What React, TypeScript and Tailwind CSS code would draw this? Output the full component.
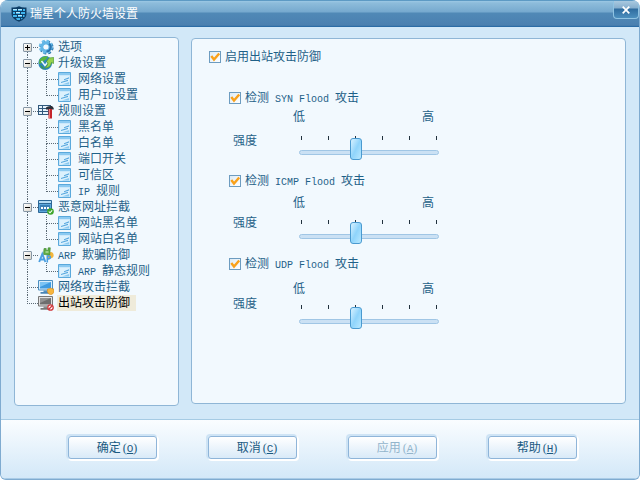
import React, { useState } from "react";

const fontStack = "font-['Liberation_Sans','Noto_Sans_CJK_SC',sans-serif]";

/* ---------- text ---------- */

/** Renders half-width runs in a monospaced face so they keep a half-em pitch. */
function Mixed({ text }: { text: string }) {
  const parts = text.match(/[\x20-\x7e]+|[^\x20-\x7e]+/g) ?? [];
  return (
    <>
      {parts.map((part, i) =>
        /^[\x20-\x7e]/.test(part) ? (
          <span key={i} className="whitespace-pre font-['Liberation_Mono',monospace] text-[10px] leading-none">
            {part}
          </span>
        ) : (
          <span key={i}>{part}</span>
        )
      )}
    </>
  );
}

/* ---------- icons ---------- */

function ShieldIcon() {
  return (
    <svg viewBox="0 0 16 16" className="size-4 shrink-0" aria-hidden="true">
      <path d="M.5 1.500 Q4.500 2 8 .3 Q11.500 2 15.500 1.500 V8 Q15.500 13 8 15.800 Q.5 13 .5 8 Z" fill="#0d3d66" />
      <path d="M2 3h4v2H2zM7 3h4v2H7zM12 3h2v2h-2zM2 6h2v2H2zM5 6h4v2H5zM10 6h4v2h-4zM2 9h4v2H2zM7 9h4v2H7zM12 9h1.500v2H12zM5 12h4v2H6zM10 12h2l-2 1.500z" fill="#3fb4ee" />
      <path d="M2 3h4v1H2zM7 3h4v1H7zM5 6h4v1H5zM7 9h4v1H7z" fill="#b4e8ff" />
    </svg>
  );
}

function GearIcon() {
  return (
    <svg viewBox="0 0 16 16" className="size-4 shrink-0" aria-hidden="true">
      <circle cx="8.500" cy="8.500" r="5.800" fill="none" stroke="#1f6ba6" strokeWidth="2.600" strokeDasharray="2.600 1.955" />
      <circle cx="7.800" cy="7.800" r="5.800" fill="none" stroke="#6fc0ec" strokeWidth="2.600" strokeDasharray="2.600 1.955" />
      <circle cx="8" cy="8" r="4.100" fill="none" stroke="#62b6e6" strokeWidth="3.200" />
      <path d="M11 4.800 A4.300 4.300 0 0 1 8.500 12.500" fill="none" stroke="#2a74ae" strokeWidth="2" />
      <circle cx="7.800" cy="8" r="2.300" fill="#f2f9fe" />
    </svg>
  );
}

function UpdateIcon() {
  return (
    <svg viewBox="0 0 16 16" className="size-4 shrink-0" aria-hidden="true">
      <circle cx="7.200" cy="8" r="6.900" fill="#2e86ba" />
      <path d="M1.500 4.500 Q5 .5 10 1.500 L8 4.500 Q5.500 5 5 7.500 L1 9 Z" fill="#58b53f" />
      <path d="M2 10 Q5 10.500 6 14.500 Q2.800 13.300 2 10Z" fill="#3c9a4b" />
      <path d="M3.500 6 L7 10.500 L13 3" fill="none" stroke="#eaf8ff" strokeWidth="1.500" />
      <path d="M8.500 6.500 L11 3 L15.700 2.500 L15.500 8.500 L13.500 7.500 Q12.500 13 6.500 13 Q10 10.500 10 8 Z" fill="#96d24e" stroke="#4d9a34" strokeWidth=".7" />
    </svg>
  );
}

function RulesIcon() {
  return (
    <svg viewBox="0 0 16 16" className="size-4 shrink-0" aria-hidden="true">
      <path d="M0 2h13v10H0z" fill="#31597c" />
      <path d="M1 3h3v2H1zM5 3h7v2H5zM1 6h3v2H1zM5 6h5v2H5zM1 9h3v2H1zM5 9h5v2H5z" fill="#e6f3fc" />
      <path d="M8 4.500 Q10 2.500 14 3 L15.700 5 V6.500 H8z" fill="#2b2f38" />
      <path d="M10.500 6h3.500v9.500h-3.500z" fill="#c5242b" />
      <path d="M11 6h1v9h-1z" fill="#f07a74" />
    </svg>
  );
}

function PageIcon() {
  return (
    <svg viewBox="0 0 16 16" className="size-4 shrink-0" aria-hidden="true">
      <path d="M.5 1.500h12v13H.5z" fill="#cbe8fb" stroke="#5aa9dc" />
      <path d="M1 2h11v2H1z" fill="#8ccaf1" />
      <path d="M2 5h9v8.500H2z" fill="#dcf1fd" />
      <path d="M6 8.300 L11 6.300 V7.600 L6 9.300zM3 11 L10 8.700 V10 L3 12z" fill="#56a7de" />
      <path d="M4 13.500 L11 11 V13.500z" fill="#8ccaf0" />
    </svg>
  );
}

function UrlIcon() {
  return (
    <svg viewBox="0 0 16 16" className="size-4 shrink-0" aria-hidden="true">
      <path d="M.5 1.500h13v12H.5z" fill="#5da7da" stroke="#2c6796" />
      <path d="M1 2h12v2H1z" fill="#b5dcf4" />
      <path d="M1 4h12v1H1z" fill="#2c6796" />
      <path d="M2 6h10v6H2z" fill="#3a7fb6" />
      <path d="M3 8h2v2H3zM6 8h2v2H6zM9 8h2v2H9z" fill="#fff" />
      <circle cx="12.500" cy="12.500" r="3.300" fill="#3da52a" />
      <path d="M10.800 12.500 L12 13.800 L14.200 11.300" fill="none" stroke="#fff" strokeWidth="1.100" />
    </svg>
  );
}

function ArpIcon() {
  return (
    <svg viewBox="0 0 16 16" className="size-4 shrink-0" aria-hidden="true">
      <path d="M9 8 Q12 3.500 15 6 Q17 10.500 12.500 11.500 L9 12z" fill="#f4b63c" />
      <path d="M5.500 7.500 L6 1.500 H8.200 V3.500 H9.800 L10.200 .8 H12.300 L11.700 8z" fill="#5fae45" stroke="#37852a" strokeWidth=".6" />
      <path d="M7.500 5 H10.500" stroke="#d6f0c8" strokeWidth="1" />
      <path d="M1.200 15 L4.300 7 L7.400 15 M2.500 12.500 H6.500" fill="none" stroke="#4b9fe0" strokeWidth="1.900" />
      <path d="M9.300 15.500 V9 Q12.800 8.500 12.300 10.500 Q12 12 9.300 12" fill="none" stroke="#4b9fe0" strokeWidth="1.600" />
    </svg>
  );
}

function MonitorIcon({ off = false }: { off?: boolean }) {
  return (
    <svg viewBox="0 0 16 16" className="size-4 shrink-0" aria-hidden="true">
      <path d="M.5 1.500h14v9.500H.5z" fill={off ? "#e2e2e2" : "#d9edfb"} stroke={off ? "#777" : "#4d8fc0"} />
      <path d="M2 3h11v6.500H2z" fill={off ? "#6e6e6e" : "#3f9be0"} />
      <path d="M2 3h11L2 8z" fill={off ? "#929292" : "#7cc4f4"} />
      <path d="M5.500 11.500h4V13h-4z" fill={off ? "#8a8a8a" : "#5490bd"} />
      <path d="M2.500 13h9.500v1.800H2.500z" fill={off ? "#777" : "#4a84b4"} />
      {off ? (
        <>
          <circle cx="12.500" cy="12.500" r="2.700" fill="#fff" stroke="#d0363a" strokeWidth="1.300" />
          <path d="M10.800 14.200 L14.200 10.800" stroke="#d0363a" strokeWidth="1.300" />
        </>
      ) : (
        <path d="M9.500 10 Q11.500 10 12.700 9 Q14 10 16 10 V13 Q15.500 15 12.700 15.800 Q10 15 9.500 13z" fill="#f6b53d" stroke="#d58a1c" strokeWidth=".6" />
      )}
    </svg>
  );
}

/* ---------- tree ---------- */

type Line = "first" | "tee" | "elbow" | "line";

function Branch({ line, className }: { line: Line; className: string }) {
  const edge = "border-dotted border-[#5d6b76]";
  return (
    <span className={`flex h-4 shrink-0 flex-col ${className}`} aria-hidden="true">
      <span
        className={`h-[9px] ${edge} ${line === "first" ? "border-b" : line === "line" ? "border-l" : "border-b border-l"}`}
      />
      <span className={`h-[7px] ${edge} ${line === "elbow" ? "" : "border-l"}`} />
    </span>
  );
}

function Toggle({ open, onClick, name }: { open: boolean; onClick: () => void; name: string }) {
  return (
    <button
      type="button"
      aria-label={name}
      aria-expanded={open}
      onClick={onClick}
      className="absolute top-1 -left-1 size-[9px] rounded-[1px] border border-[#8797a5] bg-linear-to-br from-white to-[#d8d5cb]"
    >
      <span className="absolute top-[3px] left-px h-px w-[5px] bg-black" />
      {!open && <span className="absolute top-px left-[3px] h-[5px] w-px bg-black" />}
    </button>
  );
}

type Node = { label: string; icon: React.ReactNode; children?: string[]; collapsed?: boolean };

const nodes: Node[] = [
  { label: "选项", icon: <GearIcon />, children: [], collapsed: true },
  { label: "升级设置", icon: <UpdateIcon />, children: ["网络设置", "用户ID设置"] },
  { label: "规则设置", icon: <RulesIcon />, children: ["黑名单", "白名单", "端口开关", "可信区", "IP 规则"] },
  { label: "恶意网址拦截", icon: <UrlIcon />, children: ["网站黑名单", "网站白名单"] },
  { label: "ARP 欺骗防御", icon: <ArpIcon />, children: ["ARP 静态规则"] },
  { label: "网络攻击拦截", icon: <MonitorIcon /> },
  { label: "出站攻击防御", icon: <MonitorIcon off /> },
];

function TreeNode({ node, line, selected }: { node: Node; line: Line; selected: boolean }) {
  const [open, setOpen] = useState(!node.collapsed);
  return (
    <li>
      <div className="relative flex h-4 items-center">
        <Branch line={line} className="w-[11px]" />
        {node.children && <Toggle open={open} onClick={() => setOpen(!open)} name={node.label} />}
        {node.icon}
        <span className={`ml-[3px] pr-[6px] pl-px whitespace-nowrap ${selected ? "bg-[#efebda] text-black" : ""}`}>
          <Mixed text={node.label} />
        </span>
      </div>
      {open && node.children && node.children.length > 0 && (
        <ul>
          {node.children.map((child, i) => (
            <li key={child} className="flex h-4 items-center">
              <Branch line="line" className="w-[19px]" />
              <Branch line={i === node.children!.length - 1 ? "elbow" : "tee"} className="w-3" />
              <PageIcon />
              <span className="ml-[3px] pl-px whitespace-nowrap">
                <Mixed text={child} />
              </span>
            </li>
          ))}
        </ul>
      )}
    </li>
  );
}

/* ---------- form ---------- */

function Check({ label }: { label: string }) {
  return (
    <label className="flex h-4 items-center gap-1">
      <span className="relative size-3 shrink-0">
        <input
          type="checkbox"
          defaultChecked
          className="peer block size-3 appearance-none border border-[#6d9cc0] bg-linear-to-br from-[#dcebf6] to-white"
        />
        <svg viewBox="0 0 12 12" className="pointer-events-none absolute inset-0 hidden size-3 peer-checked:block" aria-hidden="true">
          <path d="M2.300 5 L5 8.500 L10.200 2.500" fill="none" stroke="#f9a11b" strokeWidth="2.400" />
        </svg>
      </span>
      <span className="whitespace-nowrap">
        <Mixed text={label} />
      </span>
    </label>
  );
}

type Detection = { name: string; scale: string; caption: string; ticks: string };

const detections: Detection[] = [
  { name: "SYN", scale: "pt-[3px]", caption: "pt-[27px]", ticks: "mt-[11px]" },
  { name: "ICMP", scale: "pt-[6px]", caption: "pt-[26px]", ticks: "mt-[9px]" },
  { name: "UDP", scale: "pt-[9px]", caption: "pt-[24px]", ticks: "mt-[8px]" },
];

function DetectionGroup({ name, scale, caption, ticks }: Detection) {
  const id = `strength-${name}`;
  return (
    <section>
      <Check label={`检测 ${name} Flood 攻击`} />
      <div className="grid grid-cols-[60px_1fr] pl-1">
        <label htmlFor={id} className={caption}>
          强度
        </label>
        <div className={`w-[146px] ${scale}`}>
          <div className="flex justify-between pr-[5px]">
            <span>低</span>
            <span>高</span>
          </div>
          <div className={`flex justify-between pr-[2px] pl-2 ${ticks}`} aria-hidden="true">
            {[0, 1, 2, 3, 4, 5].map((t) => (
              <span key={t} className="h-1 w-px bg-[#22323e]" />
            ))}
          </div>
          <input
            id={id}
            type="range"
            min={0}
            max={5}
            defaultValue={2}
            className="-mt-[2px] ml-[6px] block h-[29px] w-[140px] appearance-none bg-transparent [&::-webkit-slider-runnable-track]:h-[5px] [&::-webkit-slider-runnable-track]:rounded-full [&::-webkit-slider-runnable-track]:border [&::-webkit-slider-runnable-track]:border-[#a0c6e5] [&::-webkit-slider-runnable-track]:bg-[#cbe1f4] [&::-webkit-slider-thumb]:-mt-[13px] [&::-webkit-slider-thumb]:h-[22px] [&::-webkit-slider-thumb]:w-3 [&::-webkit-slider-thumb]:appearance-none [&::-webkit-slider-thumb]:rounded-[3px] [&::-webkit-slider-thumb]:border [&::-webkit-slider-thumb]:border-[#4a9ad0] [&::-webkit-slider-thumb]:bg-linear-to-br [&::-webkit-slider-thumb]:from-[#d8f2ff] [&::-webkit-slider-thumb]:via-[#8fd4fb] [&::-webkit-slider-thumb]:to-[#b8e8ff]"
          />
        </div>
      </div>
    </section>
  );
}

function ActionButton({ text, mnemonic, disabled }: { text: string; mnemonic: string; disabled?: boolean }) {
  return (
    <button
      type="button"
      disabled={disabled}
      className="flex h-[23px] w-[89px] items-center justify-center gap-[2px] rounded-[3px] border border-[#8fb5d9] bg-linear-to-b from-white to-[#d9eaf8] pl-[9px] text-[#1a5a82] shadow-[-1px_-1px_0_1px_#cfe4f5,1px_1px_0_1px_#fff] disabled:text-[#93b5cc]"
    >
      <span>{text}</span>
      <span className="font-['Liberation_Serif',serif]">
        (<u className="font-['Liberation_Mono',monospace] text-[11px] leading-none">{mnemonic}</u>)
      </span>
    </button>
  );
}

export default function App() {
  return (
    <div
      className={`flex min-h-screen flex-col overflow-hidden rounded-t-lg rounded-b-md border border-t-0 border-[#7fabd0] bg-[#d2e8f8] text-[12px] leading-4 text-[#1f6188] ${fontStack}`}
    >
      <header className="flex h-[27px] items-start justify-between border-t border-b border-t-[#5d9ac4] border-b-[#2a6ca6] bg-[linear-gradient(180deg,#9cc8e4_0px,#8dbcdb_2px,#76a9ce_11px,#5089b6_12px,#4a80b0_24px,#4077a9_25px)]">
        <div className="flex items-center gap-[3px] pt-[5px] pl-[10px]">
          <ShieldIcon />
          <h1 className="text-white">瑞星个人防火墙设置</h1>
        </div>
        <button
          type="button"
          aria-label="关闭"
          className="flex h-[18px] w-[26px] items-center justify-center rounded-b-[4px] border border-t-0 border-[#8fc3e2] bg-[linear-gradient(180deg,#a9c9e0_0px,#86aecd_7px,#2f6c9f_8px,#4c8fbe_17px)]"
        >
          <svg viewBox="0 0 8 8" className="size-2" aria-hidden="true">
            <path d="M.7 .7 L7.300 7.300 M7.300 .7 L.7 7.300" stroke="#fff" strokeWidth="1.700" />
          </svg>
        </button>
      </header>

      <main className="flex flex-1 gap-3 px-[13px] pt-[10px] pb-[13px]">
        <nav className="w-[165px] shrink-0 rounded-[4px] border border-[#8fb6d6] bg-[#f2f9fe] pt-px pl-3">
          <ul>
            {nodes.map((node, i) => (
              <TreeNode
                key={node.label}
                node={node}
                line={i === 0 ? "first" : i === nodes.length - 1 ? "elbow" : "tee"}
                selected={i === nodes.length - 1}
              />
            ))}
          </ul>
        </nav>
        <div className="mt-px mb-[2px] flex-1 rounded-[4px] border border-[#8fb6d6] bg-[#f2f9fe] pt-[10px] pl-[17px]">
          <Check label="启用出站攻击防御" />
          <div className="mt-[25px] grid auto-rows-[83px] pl-5">
            {detections.map((d) => (
              <DetectionGroup key={d.name} {...d} />
            ))}
          </div>
        </div>
      </main>

      <footer className="flex justify-center gap-[51px] border-t border-b border-t-[#a6cbe4] border-b-[#a9cbe6] bg-linear-to-b from-[#fafdff] to-[#d3e8f8] pt-4 pb-[19px] pl-[5px]">
        <ActionButton text="确定" mnemonic="O" />
        <ActionButton text="取消" mnemonic="C" />
        <ActionButton text="应用" mnemonic="A" disabled />
        <ActionButton text="帮助" mnemonic="H" />
      </footer>
    </div>
  );
}
